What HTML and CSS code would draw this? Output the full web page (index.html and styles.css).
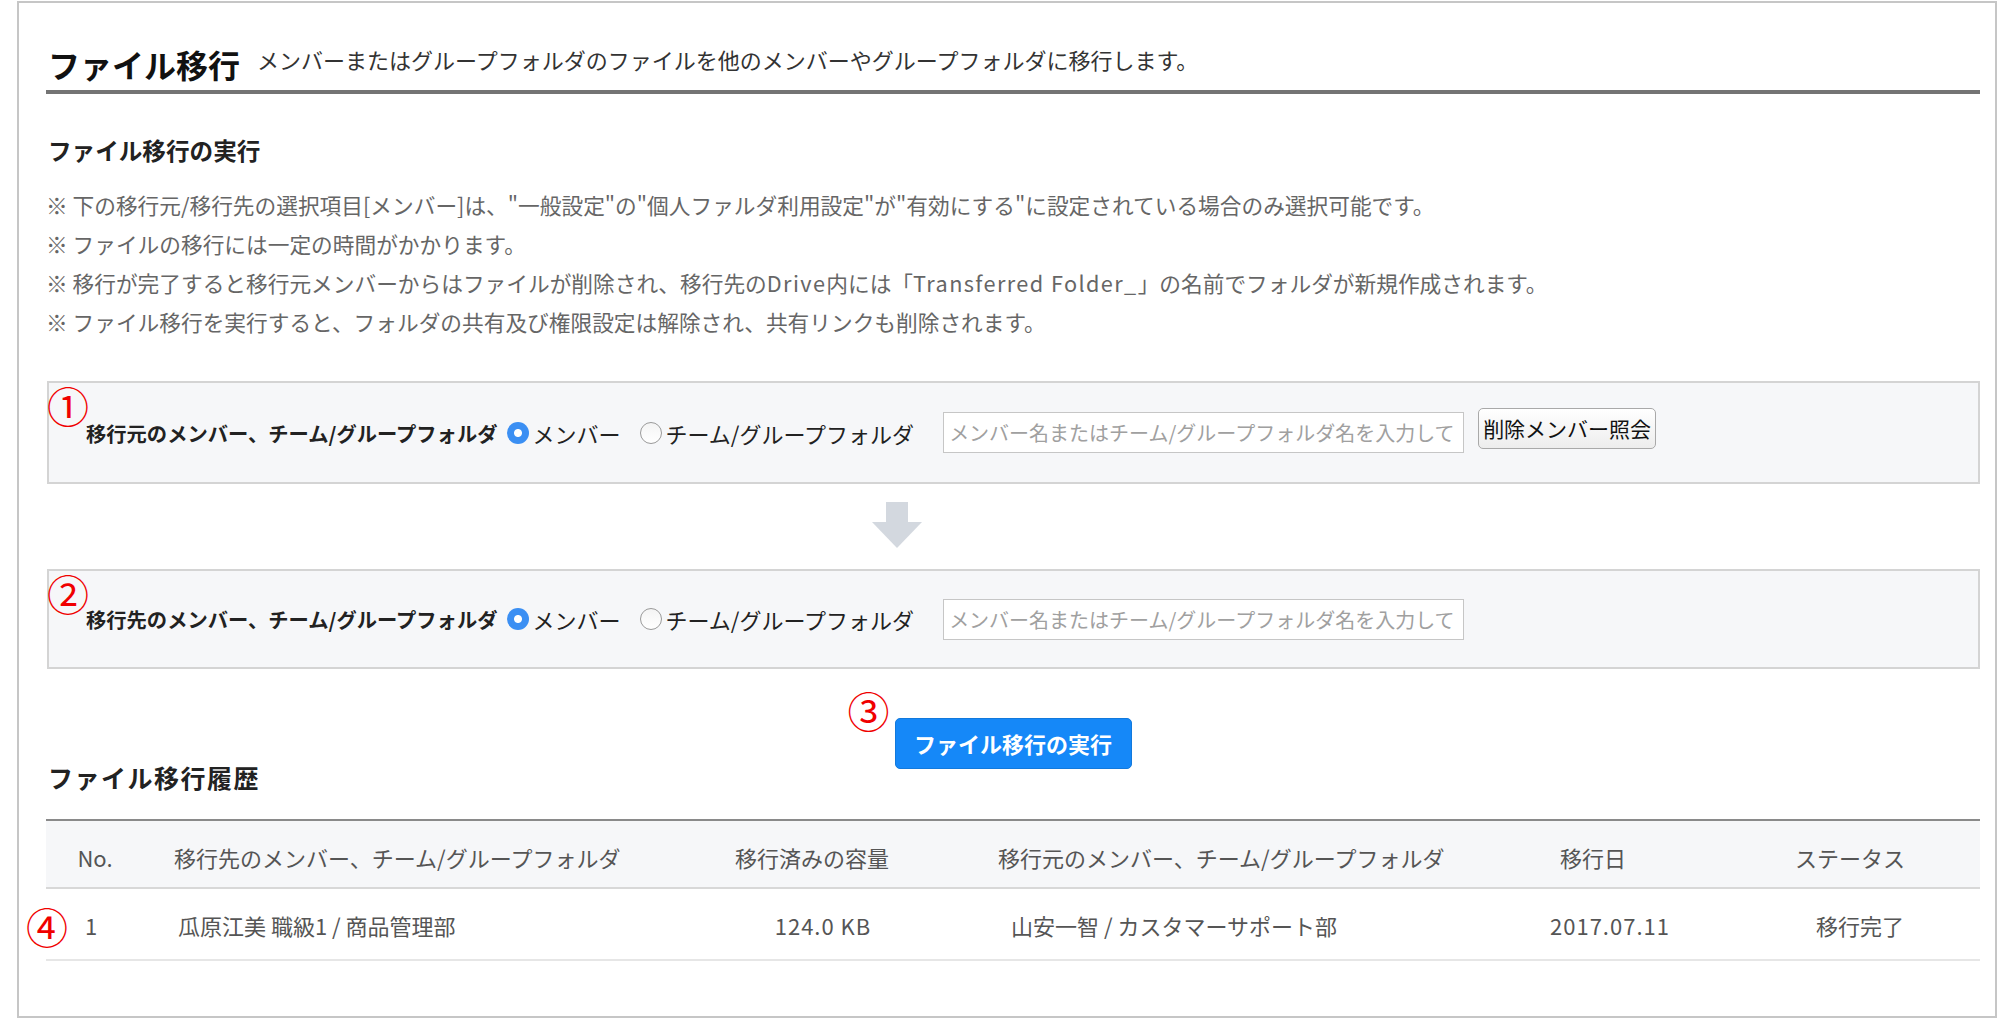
FILE: index.html
```html
<!DOCTYPE html>
<html lang="ja">
<head>
<meta charset="utf-8">
<title>ファイル移行</title>
<link rel="stylesheet" href="styles.css">
</head>
<body>
<div class="page">
  <div class="header">
    <h1 class="title">ファイル移行</h1>
    <span class="subtitle">メンバーまたはグループフォルダのファイルを他のメンバーやグループフォルダに移行します。</span>
  </div>

  <h2 class="section">ファイル移行の実行</h2>
  <div class="notes">
    <div class="note">※ 下の移行元/移行先の選択項目[メンバー]は、"一般設定"の"個人ファルダ利用設定"が"有効にする"に設定されている場合のみ選択可能です。</div>
    <div class="note">※ ファイルの移行には一定の時間がかかります。</div>
    <div class="note">※ 移行が完了すると移行元メンバーからはファイルが削除され、移行先の<span class="latin">Drive</span>内には「<span class="latin">Transferred Folder_</span>」の名前でフォルダが新規作成されます。</div>
    <div class="note">※ ファイル移行を実行すると、フォルダの共有及び権限設定は解除され、共有リンクも削除されます。</div>
  </div>

  <div class="box box-src">
    <span class="mark mark-box">①</span>
    <span class="box-label">移行元のメンバー、チーム/グループフォルダ</span>
    <span class="radio on"></span><span class="radio-text">メンバー</span>
    <span class="radio off"></span><span class="radio-text">チーム/グループフォルダ</span>
    <span class="input">メンバー名またはチーム/グループフォルダ名を入力して</span>
    <span class="btn-gray">削除メンバー照会</span>
  </div>

  <div class="arrow">
    <svg width="50" height="46" viewBox="0 0 50 46"><rect x="14" y="0" width="22" height="22" fill="#d3d8df"/><polygon points="0,20 50,20 25,46" fill="#d3d8df"/></svg>
  </div>

  <div class="box box-dst">
    <span class="mark mark-box">②</span>
    <span class="box-label">移行先のメンバー、チーム/グループフォルダ</span>
    <span class="radio on"></span><span class="radio-text">メンバー</span>
    <span class="radio off"></span><span class="radio-text">チーム/グループフォルダ</span>
    <span class="input">メンバー名またはチーム/グループフォルダ名を入力して</span>
  </div>

  <div class="exec-row">
    <div class="exec-wrap">
      <span class="mark mark-exec">③</span>
      <span class="btn-blue">ファイル移行の実行</span>
    </div>
  </div>

  <h2 class="section history">ファイル移行履歴</h2>

  <div class="table-wrap">
    <span class="mark mark-row">④</span>
    <div class="trow thead">
      <span class="c1">No.</span>
      <span class="c2">移行先のメンバー、チーム/グループフォルダ</span>
      <span class="c3">移行済みの容量</span>
      <span class="c4">移行元のメンバー、チーム/グループフォルダ</span>
      <span class="c5 h5">移行日</span>
      <span class="c6">ステータス</span>
    </div>
    <div class="trow tbody">
      <span class="c1 b1">1</span>
      <span class="c2 b2">瓜原江美 職級1 / 商品管理部</span>
      <span class="c3 b3">124.0 KB</span>
      <span class="c4 b4">山安一智 / カスタマーサポート部</span>
      <span class="c5 b5">2017.07.11</span>
      <span class="c6 b6">移行完了</span>
    </div>
  </div>
</div>
</body>
</html>
```

FILE: styles.css
```css
html, body {
  margin: 0;
  padding: 0;
  background: #ffffff;
}
body {
  font-family: "Noto Sans CJK JP", "Noto Sans", sans-serif;
  color: #333;
}
.page {
  box-sizing: border-box;
  margin: 1px 0 0 17px;
  width: 1980px;
  height: 1017px;
  border: 2px solid #c6c6c6;
  padding: 0 15px 0 27px;
}
.header {
  margin-top: 41px;
  display: flex;
  align-items: flex-start;
  padding-bottom: 6px;
  border-bottom: 4px solid #747474;
}
.title {
  margin: 0 0 0 2px;
  font-size: 32px;
  line-height: 40px;
  font-weight: 700;
  color: #111;
}
.subtitle {
  margin-left: 17px;
  font-size: 22px;
  line-height: 30px;
  color: #333;
}
.section {
  margin: 41px 0 0 2px;
  font-size: 23.6px;
  line-height: 30px;
  font-weight: 700;
  color: #222;
}
.notes {
  margin-top: 20px;
}
.note {
  font-size: 21.7px;
  line-height: 39px;
  color: #666;
}
.latin {
  letter-spacing: 1.4px;
}
.box {
  position: relative;
  box-sizing: border-box;
  margin-left: 1px;
  display: flex;
  align-items: center;
  padding-left: 37px;
  background: #f6f7f9;
  border: 2px solid #d4d4d4;
}
.box-src {
  margin-top: 40px;
  height: 103px;
}
.box-dst {
  height: 100px;
}
.box-label {
  font-size: 20.3px;
  font-weight: 700;
  color: #222;
  margin-right: 10px;
}
.radio {
  box-sizing: border-box;
  width: 22px;
  height: 22px;
  border-radius: 50%;
  flex: none;
}
.radio.on {
  background: radial-gradient(circle, #ffffff 0 3.5px, #3b8ff3 4.5px);
}
.radio.off {
  background: linear-gradient(#f4f4f4, #ffffff);
  border: 1px solid #9a9a9a;
}
.radio-text {
  font-size: 22px;
  color: #222;
  margin-left: 3px;
  margin-right: 20px;
}
.input {
  box-sizing: border-box;
  width: 521px;
  height: 41px;
  margin-left: 9px;
  border: 1px solid #c6c6c6;
  background: #ffffff;
  font-size: 20px;
  line-height: 39px;
  padding-left: 5px;
  color: #a0a0a0;
  white-space: nowrap;
  overflow: hidden;
}
.btn-gray {
  box-sizing: border-box;
  margin-left: 14px;
  margin-top: -9px;
  width: 178px;
  height: 41px;
  border: 1px solid #a9a9a9;
  border-radius: 5px;
  background: linear-gradient(#ffffff, #ededed);
  font-size: 21px;
  line-height: 39px;
  text-align: center;
  color: #111;
  white-space: nowrap;
}
.mark {
  position: absolute;
  font-size: 42px;
  line-height: 42px;
  color: #f00000;
  font-weight: 400;
}
.mark-box {
  left: -2px;
  top: 1px;
}
.arrow {
  margin: 18px 0 21px 826px;
  height: 46px;
}
.arrow svg {
  display: block;
}
.exec-row {
  display: flex;
  justify-content: center;
  margin-top: 49px;
}
.exec-wrap {
  position: relative;
}
.btn-blue {
  display: block;
  box-sizing: border-box;
  width: 237px;
  height: 51px;
  border-radius: 5px;
  background: #1588f8;
  border: 1px solid #1279dc;
  color: #ffffff;
  font-size: 22px;
  font-weight: 700;
  line-height: 49px;
  text-align: center;
}
.mark-exec {
  left: -47px;
  top: -29px;
}
.history {
  margin-top: -7px;
  font-size: 25px;
  letter-spacing: 1.5px;
}
.table-wrap {
  position: relative;
  margin-top: 27px;
}
.mark-row {
  left: -20px;
  top: 86px;
}
.trow {
  box-sizing: border-box;
  display: grid;
  grid-template-columns: 98px 560px 216px 580px 220px 1fr;
  align-items: center;
  font-size: 22px;
  color: #555;
}
.thead {
  height: 70px;
  background: #f6f7f9;
  border-top: 2px solid #8a8a8a;
  border-bottom: 2px solid #d8d8d8;
  padding-top: 6px;
}
.tbody {
  height: 72px;
  border-bottom: 2px solid #e6e6e6;
  padding-top: 2px;
}
.c1, .c3, .c5, .c6 {
  text-align: center;
}
.b1 {
  padding-right: 8px;
}
.c2 {
  padding-left: 30px;
}
.b2 {
  padding-left: 34px;
}
.c4 {
  padding-left: 78px;
}
.b4 {
  padding-left: 91px;
}
.b3 {
  padding-left: 22px;
  letter-spacing: 1px;
}
.b5 {
  letter-spacing: 1px;
}
.h5 {
  padding-right: 34px;
}
.b6 {
  padding-left: 20px;
}
```
